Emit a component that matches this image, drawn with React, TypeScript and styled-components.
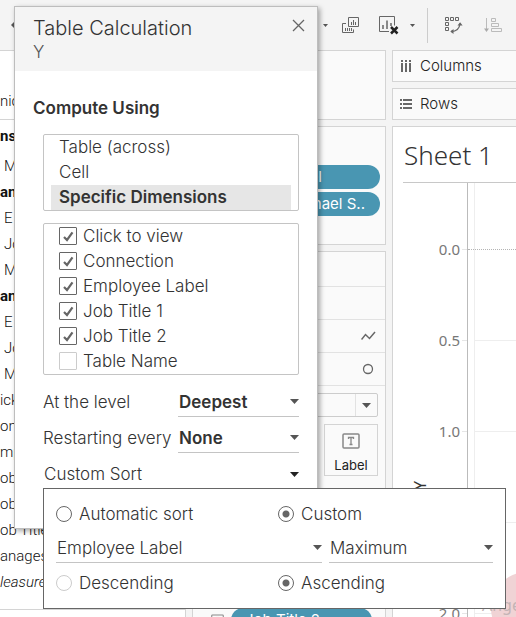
import React, { useState } from "react";
import styled, { createGlobalStyle, css } from "styled-components";

const ui = `Inter, "Noto Sans", sans-serif`;
const sheetFont = `"Noto Sans", "Open Sans", sans-serif`;
const line = "#d4d4d4";

const Global = createGlobalStyle`
  *, *::before, *::after { box-sizing: border-box; }
  body { margin: 0; background: #f4f4f4; overflow: hidden; }
  button, select, input { font: inherit; color: inherit; margin: 0; }
`;

const Page = styled.div`
  position: relative;
  display: flex;
  flex-direction: column;
  height: 100vh;
  overflow: hidden;
  background: #f4f4f4;
  color: #333;
  font: 300 17px/24px ${ui};
`;

/* Toolbar */
const Toolbar = styled.header`
  display: flex;
  align-items: center;
  justify-content: flex-end;
  flex: none;
  height: 50px;
  padding: 0 14px 0 11px;
`;
const ToolButton = styled.button<{ $gap?: number }>`
  display: flex;
  padding: 0;
  border: 0;
  background: none;
  margin-left: ${(p) => p.$gap ?? 0}px;
  svg { display: block; }
`;
const BackButton = styled(ToolButton)`
  margin-right: auto;
`;
const Divider = styled.span`
  width: 1px;
  height: 35px;
  margin-left: 12px;
  background: #ccc;
`;

/* Workspace */
const Workspace = styled.main`
  flex: 1;
  display: grid;
  grid-template-columns: 186px 194px minmax(0, 1fr);
  column-gap: 6px;
  min-height: 0;
`;
const DataPane = styled.aside`
  background: #fff;
  border: solid ${line};
  border-width: 1px 1px 0 0;
  color: #111;
  font: 300 15px/26px Roboto, ${ui};
  white-space: nowrap;
  overflow: hidden;
`;
const PaneSearch = styled.div`
  padding-top: 37px;
  height: 69px;
  border-bottom: 1px solid ${line};
`;
const FieldList = styled.ul`
  list-style: none;
  margin: 0;
  padding: 3px 0 14px;
  border-bottom: 1px solid ${line};
`;
const Field = styled.li<{ $head?: boolean; $nested?: boolean; $italic?: boolean }>`
  padding-left: ${(p) => (p.$nested ? 4 : 0)}px;
  font-weight: ${(p) => (p.$head ? 700 : 300)};
  font-style: ${(p) => (p.$italic ? "italic" : "normal")};
  &:first-child { margin-bottom: 4px; }
`;

const Cards = styled.section`
  display: flex;
  flex-direction: column;
  gap: 6px;
  min-height: 0;
`;
const Card = styled.div<{ $h?: number }>`
  flex: ${(p) => (p.$h ? "none" : "1")};
  height: ${(p) => (p.$h ? `${p.$h}px` : "auto")};
  background: #fafafa;
  border: 1px solid ${line};
`;
const PillCard = styled(Card)`
  display: flex;
  flex-direction: column;
  gap: 3px;
  padding: 38px 5px 0;
`;
const Pill = styled.span<{ $end?: number }>`
  flex: none;
  height: 24px;
  padding: 0 ${(p) => p.$end ?? 15}px 0 14px;
  border-radius: 12px;
  background: #4996b2;
  color: #fff;
  font-size: 15px;
  font-weight: 400;
  line-height: 24px;
  text-align: right;
  white-space: nowrap;
  overflow: hidden;
`;
const MarkRow = styled.div`
  display: flex;
  align-items: center;
  justify-content: flex-end;
  height: 33px;
  padding-right: 9px;
  border-bottom: 1px solid #e2e2e2;
`;
const FirstMarkRow = styled(MarkRow)`
  height: 35px;
`;
const MarkType = styled.button`
  display: flex;
  justify-content: flex-end;
  width: 100%;
  height: 24px;
  padding: 0;
  border: 1px solid #ccc;
  border-radius: 2px;
  background: #fafafa;
`;
const MarkTypeArrow = styled.span`
  display: flex;
  align-items: center;
  justify-content: center;
  width: 22px;
  border-left: 1px solid #e2e2e2;
`;
const MarkTools = styled.div`
  display: flex;
  flex-direction: column;
  align-items: flex-end;
  gap: 7px;
  padding: 7px 7px 0;
`;
const LabelButton = styled.button`
  display: flex;
  flex-direction: column;
  align-items: center;
  gap: 7px;
  width: 54px;
  height: 52px;
  padding: 8px 0 0;
  border: 1px solid ${line};
  background: #fafafa;
  color: #222;
  font-size: 13px;
  font-weight: 400;
  line-height: 18px;
`;
const LabelPillRow = styled.div`
  display: flex;
  align-items: center;
  gap: 7px;
  padding: 132px 13px 0 18px;
`;
const LabelPill = styled(Pill)`
  flex: 1;
  text-align: left;
`;

const Sheet = styled.section`
  display: flex;
  flex-direction: column;
  gap: 6px;
  min-width: 0;
`;
const Shelf = styled.div`
  display: flex;
  align-items: center;
  gap: 8px;
  height: 32px;
  padding-left: 7px;
  background: #fafafa;
  border: solid ${line};
  border-width: 1px 0 1px 1px;
  font-size: 15px;
  color: #222;
`;
const View = styled.div`
  flex: 1;
  display: flex;
  flex-direction: column;
  padding-left: 10px;
  background: #fff;
  border: solid ${line};
  border-width: 1px 0 0 1px;
`;
const SheetTitle = styled.h1`
  margin: 0;
  padding: 10px 0 0 1px;
  height: 55px;
  font: 300 26px/36px ${sheetFont};
  color: #333;
`;
const Plot = styled.div`
  flex: 1;
  display: grid;
  grid-template-columns: 64px 1fr;
  border-top: 1px solid #c8c8c8;
`;
const AxisColumn = styled.div`
  display: flex;
  align-items: flex-start;
  justify-content: space-between;
  padding-left: 8px;
`;
const AxisTitle = styled.div`
  display: flex;
  height: 307px;
  align-items: flex-end;
`;
const AxisName = styled.span`
  font: 400 16px/18px ${sheetFont};
  writing-mode: vertical-rl;
  transform: rotate(180deg);
  color: #333;
`;
const Ticks = styled.div`
  flex: 1;
  padding-top: 54px;
`;
const Tick = styled.div`
  display: flex;
  align-items: center;
  justify-content: flex-end;
  gap: 2px;
  height: 24px;
  margin-bottom: 67px;
  font: 400 15px/24px ${sheetFont};
  color: #777;
  &::after { content: ""; width: 5px; height: 1px; background: #e6e6e6; }
`;
const Marks = styled.div`
  position: relative;
  border-left: 1px solid #bbb;
  padding: 66px 0 0 6px;
  overflow: hidden;
  &::before {
    content: "";
    position: absolute;
    inset: 0 auto 0 6px;
    width: 1px;
    background: #eee;
  }
`;
const GridLine = styled.div<{ $zero?: boolean }>`
  height: 91px;
  margin-left: ${(p) => (p.$zero ? -6 : 0)}px;
  border-top: 1px ${(p) => (p.$zero ? "dotted #b4b4b4" : "solid #eee")};
`;
const Bubble = styled.div`
  position: absolute;
  left: 23px;
  top: 389px;
  width: 72px;
  height: 72px;
  border-radius: 50%;
  background: #f0d3d5;
`;
const BubbleLabel = styled.span`
  position: absolute;
  left: 14px;
  top: 411px;
  color: #c4b4b5;
  font: 400 16px/22px ${sheetFont};
`;

/* Dialog */
const Dialog = styled.section`
  position: absolute;
  left: 14px;
  top: 6px;
  width: 304px;
  height: 523px;
  background: #fff;
  border: 1px solid #bdbdbd;
  box-shadow: 2px 2px 5px rgba(0, 0, 0, 0.35);
`;
const DialogHead = styled.header`
  display: flex;
  justify-content: space-between;
  align-items: flex-start;
  height: 64px;
  padding: 8px 12px 0 18px;
  background: #f4f4f4;
`;
const DialogTitle = styled.h2`
  margin: 0;
  font-size: 20px;
  font-weight: 300;
  line-height: 26px;
`;
const DialogSubtitle = styled.p`
  margin: 0;
  line-height: 22px;
  color: #555;
`;
const CloseButton = styled.button`
  display: flex;
  margin-top: 4px;
  padding: 0;
  border: 0;
  background: none;
`;
const DialogBody = styled.div`
  padding: 25px 18px 0;
`;
const SectionTitle = styled.h3`
  margin: 0 0 14px;
  font-size: 17px;
  font-weight: 600;
  line-height: 24px;
`;
const Inset = styled.div`
  padding: 0 0 0 10px;
`;
const listFrame = css`
  margin: 0;
  border: 1px solid #c4c4c4;
  border-radius: 2px;
`;
const ListBox = styled.div`
  ${listFrame}
  padding: 0 7px;
`;
const Option = styled.button<{ $on: boolean }>`
  display: block;
  width: 100%;
  height: 25px;
  padding: 0 8px 1px;
  border: 0;
  background: ${(p) => (p.$on ? "#e6e6e6" : "none")};
  font-weight: ${(p) => (p.$on ? 600 : 300)};
  line-height: 24px;
  text-align: left;
`;
const CheckList = styled.fieldset`
  ${listFrame}
  margin-top: 12px;
  padding: 0 15px;
`;
const CheckRow = styled.label`
  display: flex;
  align-items: center;
  gap: 6px;
  height: 25px;
  padding-bottom: 2px;
`;
const Check = styled.input.attrs({ type: "checkbox" })`
  appearance: none;
  flex: none;
  width: 18px;
  height: 18px;
  border: 1px solid #ccc;
  border-radius: 1px;
  background: #fff;
  &:checked {
    border-color: #666;
    background: #fff
      url("data:image/svg+xml,%3Csvg xmlns='http://www.w3.org/2000/svg' viewBox='0 0 16 16'%3E%3Cpath d='M4 9 7 12 12.500 4.300' fill='none' stroke='%23666' stroke-width='2.200'/%3E%3C/svg%3E")
      center / 16px;
  }
`;
const Setting = styled.div`
  display: grid;
  grid-template-columns: 135px 1fr;
  align-items: center;
  height: 36px;
  white-space: nowrap;
`;
const Settings = styled.div`
  padding-top: 9px;
`;
const SelectBox = styled.div<{ $bold?: boolean }>`
  display: flex;
  align-items: center;
  height: 30px;
  border-bottom: 1px solid #c4c4c4;
  font-weight: ${(p) => (p.$bold ? 600 : 300)};
`;
const Select = styled.select`
  appearance: none;
  flex: 1;
  min-width: 0;
  height: 28px;
  padding: 0 0 0 1px;
  border: 0;
  background: none;
`;
const SortButton = styled.button`
  display: flex;
  align-items: center;
  justify-content: space-between;
  width: 100%;
  height: 36px;
  padding: 0 0 0 1px;
  border: 0;
  background: none;
  font-weight: 300;
`;

/* Sort popup */
const Popup = styled.form`
  position: absolute;
  left: 43px;
  top: 488px;
  width: 463px;
  padding: 8px 12px;
  background: #fff;
  border: 1px solid #666;
`;
const RadioRow = styled.div`
  display: grid;
  grid-template-columns: 222px 1fr;
  height: 34px;
`;
const RadioLabel = styled.label`
  display: flex;
  align-items: center;
  gap: 7px;
`;
const Radio = styled.input.attrs({ type: "radio" })`
  appearance: none;
  flex: none;
  width: 16px;
  height: 16px;
  border: 1px solid #666;
  border-radius: 50%;
  background: #fff;
  &:checked { background: radial-gradient(circle, #666 3px, #fff 4px); }
  &:disabled { border-color: #ccc; }
`;
const SortSelects = styled.div`
  display: grid;
  grid-template-columns: 266px 1fr;
  gap: 7px;
  height: 35px;
  padding-top: 2px;
`;

const Caret = ({ color = "#555", w = 9 }: { color?: string; w?: number }) => (
  <svg width={w} height={w === 9 ? 5 : 3} viewBox="0 0 9 5" preserveAspectRatio="none">
    <path d="M0 0h9L4.5 5z" fill={color} />
  </svg>
);
const DuplicateIcon = () => (
  <svg width="17" height="17" viewBox="0 0 17 17" fill="none" stroke="#666">
    <path d="M6.5.5h10v9h-10zM4 6.500H.5v9h11v-3M9.500 5v3M11.500 3v5M13.500 5v3M3.500 11v3M5.500 11v3M7.500 11v3M9.500 11v3" />
  </svg>
);
const ClearIcon = () => (
  <svg width="20" height="19" viewBox="0 0 20 19" fill="none">
    <path d="M10 15.500H.5V.5h15v9" stroke="#666" />
    <path d="M4 9v4M8 4.500V13M12 7v3" stroke="#666" strokeWidth="1.5" />
    <path d="m12 11 6.500 6.500M18.500 11 12 17.500" stroke="#222" strokeWidth="2.500" />
  </svg>
);
const SwapIcon = () => (
  <svg width="18" height="17" viewBox="0 0 18 17" fill="none" stroke="#666">
    <path d="M.5.5h3v3h-3zM5.500.5h3v3h-3zM10.500.5h3v3h-3zM.5 5.500h3v3h-3zM.5 10.500h3v3h-3z" />
    <path d="M6 14.500c6 0 8.500-3 9-8" strokeWidth="1.3" />
    <path d="m12.500 8.500 2.600-3.300 2.500 3.300zM8.500 12l-3.200 2.500L8.500 17z" fill="#666" stroke="none" />
  </svg>
);
const SortIcon = () => (
  <svg width="18" height="15" viewBox="0 0 18 15" fill="none" stroke="#bbb">
    <path d="M2.500 0v12M7.500.5h4v3h-4zM7.500 5.500h7v3h-7zM7.500 10.500h10v3h-10z" />
    <path d="M0 10.500h5L2.500 14z" fill="#aaa" stroke="none" />
  </svg>
);
const ColumnsIcon = () => (
  <svg width="12" height="12" viewBox="0 0 12 12" fill="#666">
    <path d="M1 0h2v2H1zM5 0h2v2H5zM9 0h2v2H9zM1 3h2v9H1zM5 3h2v9H5zM9 3h2v9H9z" />
  </svg>
);
const RowsIcon = () => (
  <svg width="12" height="12" viewBox="0 0 12 12" fill="#666">
    <path d="M0 1h2v2H0zM0 5h2v2H0zM0 9h2v2H0zM3 1h9v2H3zM3 5h9v2H3zM3 9h9v2H3z" />
  </svg>
);
const TextIcon = ({ w = 18, h = 16 }: { w?: number; h?: number }) => (
  <svg width={w} height={h} viewBox="0 0 18 16" fill="none" stroke="#888">
    <rect x="1" y="1" width="16" height="14" rx="1" strokeWidth="1.500" />
    <path d="M6.500 6V4.500h5V6M9 4.500v7M7.500 11.500h3" strokeWidth="1.300" />
  </svg>
);

type FieldDef = [string, "head" | "nested" | "plain" | "italic"];
const fields: FieldDef[] = [
  ["ns", "head"], ["M", "nested"], ["ana", "head"], ["E", "nested"], ["Jo", "nested"], ["M", "nested"],
  ["ana", "head"], ["E", "nested"], ["Jo", "nested"], ["M", "nested"], ["ick t", "plain"],
  ["onne", "plain"], ["mplo", "plain"], ["ob", "plain"], ["ob", "plain"],
  ["ob Title", "plain"], ["anages", "plain"], ["leasure", "italic"],
];
const modes = ["Table (across)", "Cell", "Specific Dimensions"];
const dimensions = ["Click to view", "Connection", "Employee Label", "Job Title 1", "Job Title 2", "Table Name"];

export default function App() {
  const [mode, setMode] = useState(modes[2]);
  return (
    <Page>
      <Global />
      <Toolbar>
        <BackButton aria-label="Back">
          <svg width="8" height="8" viewBox="0 0 8 8"><path d="M0 4l4-4 4 4-4 4z" fill="#555" /></svg>
        </BackButton>
        <ToolButton aria-label="New sheet options"><Caret w={5} /></ToolButton>
        <ToolButton aria-label="Duplicate" $gap={14}><DuplicateIcon /></ToolButton>
        <ToolButton aria-label="Clear sheet" $gap={20}><ClearIcon /></ToolButton>
        <ToolButton aria-label="Clear options" $gap={11}><Caret w={5} /></ToolButton>
        <Divider />
        <ToolButton aria-label="Swap rows and columns" $gap={17}><SwapIcon /></ToolButton>
        <ToolButton aria-label="Sort" $gap={21}><SortIcon /></ToolButton>
      </Toolbar>

      <Workspace>
        <DataPane>
          <PaneSearch>nic</PaneSearch>
          <FieldList>
            {fields.map(([name, kind], i) => (
              <Field key={i} $head={kind === "head"} $nested={kind === "nested"} $italic={kind === "italic"}>
                {name}
              </Field>
            ))}
          </FieldList>
        </DataPane>

        <Cards>
          <Card $h={70} />
          <PillCard $h={119}>
            <Pill $end={58}>Label</Pill>
            <Pill>Michael S..</Pill>
          </PillCard>
          <Card>
            <FirstMarkRow />
            <MarkRow />
            <MarkRow>
              <svg width="15" height="10" viewBox="0 0 15 10" fill="none" stroke="#666" strokeWidth="1.500">
                <path d="m.5 8.500 4-5 4 4L14 1" />
              </svg>
            </MarkRow>
            <MarkRow>
              <svg width="15" height="12" viewBox="0 0 15 12" fill="none" stroke="#666" strokeWidth="1.300">
                <circle cx="7" cy="6" r="4.500" />
              </svg>
            </MarkRow>
            <MarkTools>
              <MarkType aria-label="Mark type"><MarkTypeArrow><Caret /></MarkTypeArrow></MarkType>
              <LabelButton><TextIcon />Label</LabelButton>
            </MarkTools>
            <LabelPillRow>
              <TextIcon w={13} h={12} />
              <LabelPill>Job Title 2..</LabelPill>
            </LabelPillRow>
          </Card>
        </Cards>

        <Sheet>
          <Shelf><ColumnsIcon />Columns</Shelf>
          <Shelf><RowsIcon />Rows</Shelf>
          <View>
            <SheetTitle>Sheet 1</SheetTitle>
            <Plot>
              <AxisColumn>
                <AxisTitle><AxisName>Y</AxisName></AxisTitle>
                <Ticks>
                  {["0.0", "0.5", "1.0", "1.5", "2.0"].map((t) => <Tick key={t}>{t}</Tick>)}
                </Ticks>
              </AxisColumn>
              <Marks>
                <GridLine $zero />
                <GridLine />
                <GridLine />
                <GridLine />
                <GridLine />
                <Bubble />
                <BubbleLabel>Angel</BubbleLabel>
              </Marks>
            </Plot>
          </View>
        </Sheet>
      </Workspace>

      <Dialog role="dialog" aria-labelledby="dialog-title">
        <DialogHead>
          <div>
            <DialogTitle id="dialog-title">Table Calculation</DialogTitle>
            <DialogSubtitle>Y</DialogSubtitle>
          </div>
          <CloseButton aria-label="Close">
            <svg width="13" height="13" viewBox="0 0 13 13" stroke="#666" strokeWidth="1.300">
              <path d="m1 1 11 11M12 1 1 12" />
            </svg>
          </CloseButton>
        </DialogHead>
        <DialogBody>
          <SectionTitle>Compute Using</SectionTitle>
          <Inset>
            <ListBox role="listbox" aria-label="Compute Using">
              {modes.map((m) => (
                <Option key={m} role="option" aria-selected={m === mode} $on={m === mode} onClick={() => setMode(m)}>
                  {m}
                </Option>
              ))}
            </ListBox>
            <CheckList aria-label="Dimensions">
              {dimensions.map((d) => (
                <CheckRow key={d}>
                  <Check defaultChecked={d !== "Table Name"} />
                  {d}
                </CheckRow>
              ))}
            </CheckList>
            <Settings>
              <Setting>
                <label htmlFor="level">At the level</label>
                <SelectBox $bold>
                  <Select id="level"><option>Deepest</option></Select>
                  <Caret />
                </SelectBox>
              </Setting>
              <Setting>
                <label htmlFor="restart">Restarting every</label>
                <SelectBox $bold>
                  <Select id="restart"><option>None</option></Select>
                  <Caret />
                </SelectBox>
              </Setting>
              <SortButton aria-expanded>Custom Sort<Caret color="#222" /></SortButton>
            </Settings>
          </Inset>
        </DialogBody>
      </Dialog>

      <Popup>
        <RadioRow>
          <RadioLabel><Radio name="kind" />Automatic sort</RadioLabel>
          <RadioLabel><Radio name="kind" defaultChecked />Custom</RadioLabel>
        </RadioRow>
        <SortSelects>
          <SelectBox>
            <Select aria-label="Sort field"><option>Employee Label</option></Select>
            <Caret />
          </SelectBox>
          <SelectBox>
            <Select aria-label="Aggregation"><option>Maximum</option></Select>
            <Caret />
          </SelectBox>
        </SortSelects>
        <RadioRow>
          <RadioLabel><Radio name="order" disabled />Descending</RadioLabel>
          <RadioLabel><Radio name="order" defaultChecked />Ascending</RadioLabel>
        </RadioRow>
      </Popup>
    </Page>
  );
}
